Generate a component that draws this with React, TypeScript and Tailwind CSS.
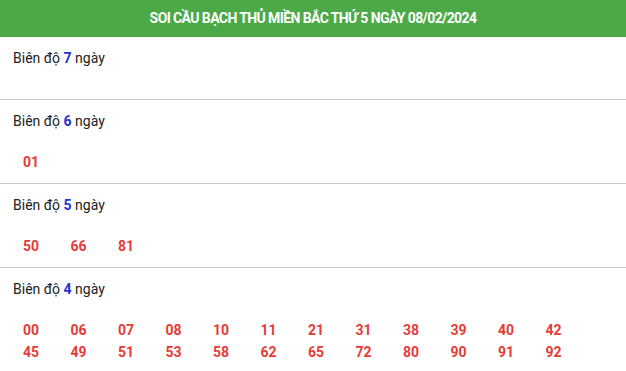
const GROUPS: { days: number; nums: string[] }[] = [
  { days: 7, nums: [] },
  { days: 6, nums: ["01"] },
  { days: 5, nums: ["50", "66", "81"] },
  {
    days: 4,
    nums: [
      "00", "06", "07", "08", "10", "11", "21", "31", "38", "39", "40", "42",
      "45", "49", "51", "53", "58", "62", "65", "72", "80", "90", "91", "92",
    ],
  },
];

export default function App() {
  return (
    <div className="w-[626px] bg-white font-['Roboto',sans-serif] text-[#222]">
      {/* Title bar */}
      <div className="h-[37px] flex items-center justify-center bg-[#4ca948]">
        <h1 className="text-white text-[14px] font-bold tracking-[-0.6px] whitespace-nowrap">
          SOI CẦU BẠCH THỦ MIỀN BẮC THỨ 5 NGÀY 08/02/2024
        </h1>
      </div>

      {GROUPS.map((g) => (
        <div key={g.days} className="border-b border-[#c8c8c8]">
          <div className="pl-[13px] pt-[11px] text-[14px] leading-[20px]">
            Biên độ <span className="font-bold text-[#1f33d6]">{g.days}</span> ngày
          </div>
          {g.nums.length > 0 ? (
            <div className="grid grid-cols-[repeat(12,47.5px)] pl-[23px] pt-[20px] pb-[10px] text-[14px] leading-[22px] font-bold text-[#e63b37]">
              {g.nums.map((n) => (
                <span key={n}>{n}</span>
              ))}
            </div>
          ) : (
            <div className="h-[31px]" />
          )}
        </div>
      ))}
    </div>
  );
}
